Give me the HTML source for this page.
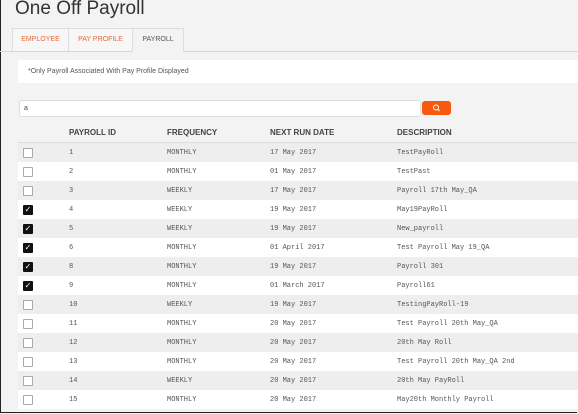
<!DOCTYPE html>
<html><head><style>
body{margin:0;width:578px;height:414px;overflow:hidden;background:#f3f3f3;font-family:"Liberation Sans",sans-serif;}
.frame{position:absolute;left:0;top:0;width:576px;height:412px;border:1px solid #222;border-top:none;border-right:none;}
.title{position:absolute;left:15px;top:-2px;font-size:19px;color:#333;}
.tabs{position:absolute;left:0;top:51px;width:578px;border-top:1px solid #d6d6d6;}
.tab{position:absolute;top:28px;height:22px;background:#f7f7f7;border:1px solid #ddd;border-bottom:none;font-size:7px;line-height:22px;text-align:center;color:#e8683a;}
.info{position:absolute;left:18px;top:60px;width:560px;height:23px;background:#fff;font-size:7px;line-height:23px;color:#555;}
.search{position:absolute;left:19px;top:100px;width:400px;height:15px;background:#fff;border:1px solid #ddd;border-radius:3px;font-size:7px;line-height:15px;color:#444;}
.btn{position:absolute;left:422px;top:101px;width:29px;height:14px;background:#f55a0f;border-radius:3px;}
table{position:absolute;left:18px;top:123px;width:560px;border-collapse:collapse;}
th{font-size:8px;color:#444;text-align:left;height:19px;font-weight:bold;border-bottom:1px solid #ddd;padding:0;}
td{font-family:"Liberation Mono",monospace;font-size:7px;color:#555;height:19px;padding:0;}
tr.g td{background:#eeeeee;}
tr.w td{background:#fff;}
.cb{display:inline-block;width:8px;height:8px;border:1px solid #aaa;background:#fff;border-radius:1px;margin-left:5px;vertical-align:middle;}
.ck{display:inline-block;width:10px;height:10px;background:#111;border-radius:1px;margin-left:5px;vertical-align:middle;color:#fff;font-size:8px;line-height:10px;text-align:center;font-family:"DejaVu Sans",sans-serif;}
</style></head><body>
<div class="frame"></div>
<div class="title">One Off Payroll</div>
<div class="tabs"></div>
<div class="tab" style="left:12px;width:55px">EMPLOYEE</div>
<div class="tab" style="left:68px;width:63px">PAY PROFILE</div>
<div class="tab" style="left:132px;width:50px;background:#f3f3f3;color:#555;height:23px">PAYROLL</div>
<div class="info"><span style="margin-left:10px">*Only Payroll Associated With Pay Profile Displayed</span></div>
<div class="search"><span style="margin-left:4px">a</span></div>
<div class="btn"><svg width="29" height="14"><circle cx="14" cy="6.5" r="2.5" fill="none" stroke="#fff" stroke-width="1"/><line x1="15.8" y1="8.3" x2="17.5" y2="10" stroke="#fff"/></svg></div>
<table>
<tr><th style="width:51px"></th><th style="width:98px">PAYROLL ID</th><th style="width:103px">FREQUENCY</th><th style="width:127px">NEXT RUN DATE</th><th>DESCRIPTION</th></tr>
<tr class="g"><td><span class="cb"></span></td><td>1</td><td>MONTHLY</td><td>17 May 2017</td><td>TestPayRoll</td></tr>
<tr class="w"><td><span class="cb"></span></td><td>2</td><td>MONTHLY</td><td>01 May 2017</td><td>TestPast</td></tr>
<tr class="g"><td><span class="cb"></span></td><td>3</td><td>WEEKLY</td><td>17 May 2017</td><td>Payroll 17th May_QA</td></tr>
<tr class="w"><td><span class="ck">✓</span></td><td>4</td><td>WEEKLY</td><td>19 May 2017</td><td>May19PayRoll</td></tr>
<tr class="g"><td><span class="ck">✓</span></td><td>5</td><td>WEEKLY</td><td>19 May 2017</td><td>New_payroll</td></tr>
<tr class="w"><td><span class="ck">✓</span></td><td>6</td><td>MONTHLY</td><td>01 April 2017</td><td>Test Payroll May 19_QA</td></tr>
<tr class="g"><td><span class="ck">✓</span></td><td>8</td><td>MONTHLY</td><td>19 May 2017</td><td>Payroll 301</td></tr>
<tr class="w"><td><span class="ck">✓</span></td><td>9</td><td>MONTHLY</td><td>01 March 2017</td><td>Payroll61</td></tr>
<tr class="g"><td><span class="cb"></span></td><td>10</td><td>WEEKLY</td><td>19 May 2017</td><td>TestingPayRoll-19</td></tr>
<tr class="w"><td><span class="cb"></span></td><td>11</td><td>MONTHLY</td><td>20 May 2017</td><td>Test Payroll 20th May_QA</td></tr>
<tr class="g"><td><span class="cb"></span></td><td>12</td><td>MONTHLY</td><td>20 May 2017</td><td>20th May Roll</td></tr>
<tr class="w"><td><span class="cb"></span></td><td>13</td><td>MONTHLY</td><td>20 May 2017</td><td>Test Payroll 20th May_QA 2nd</td></tr>
<tr class="g"><td><span class="cb"></span></td><td>14</td><td>WEEKLY</td><td>20 May 2017</td><td>20th May PayRoll</td></tr>
<tr class="w"><td><span class="cb"></span></td><td>15</td><td>MONTHLY</td><td>20 May 2017</td><td>May20th Monthly Payroll</td></tr>
</table>
</body></html>
